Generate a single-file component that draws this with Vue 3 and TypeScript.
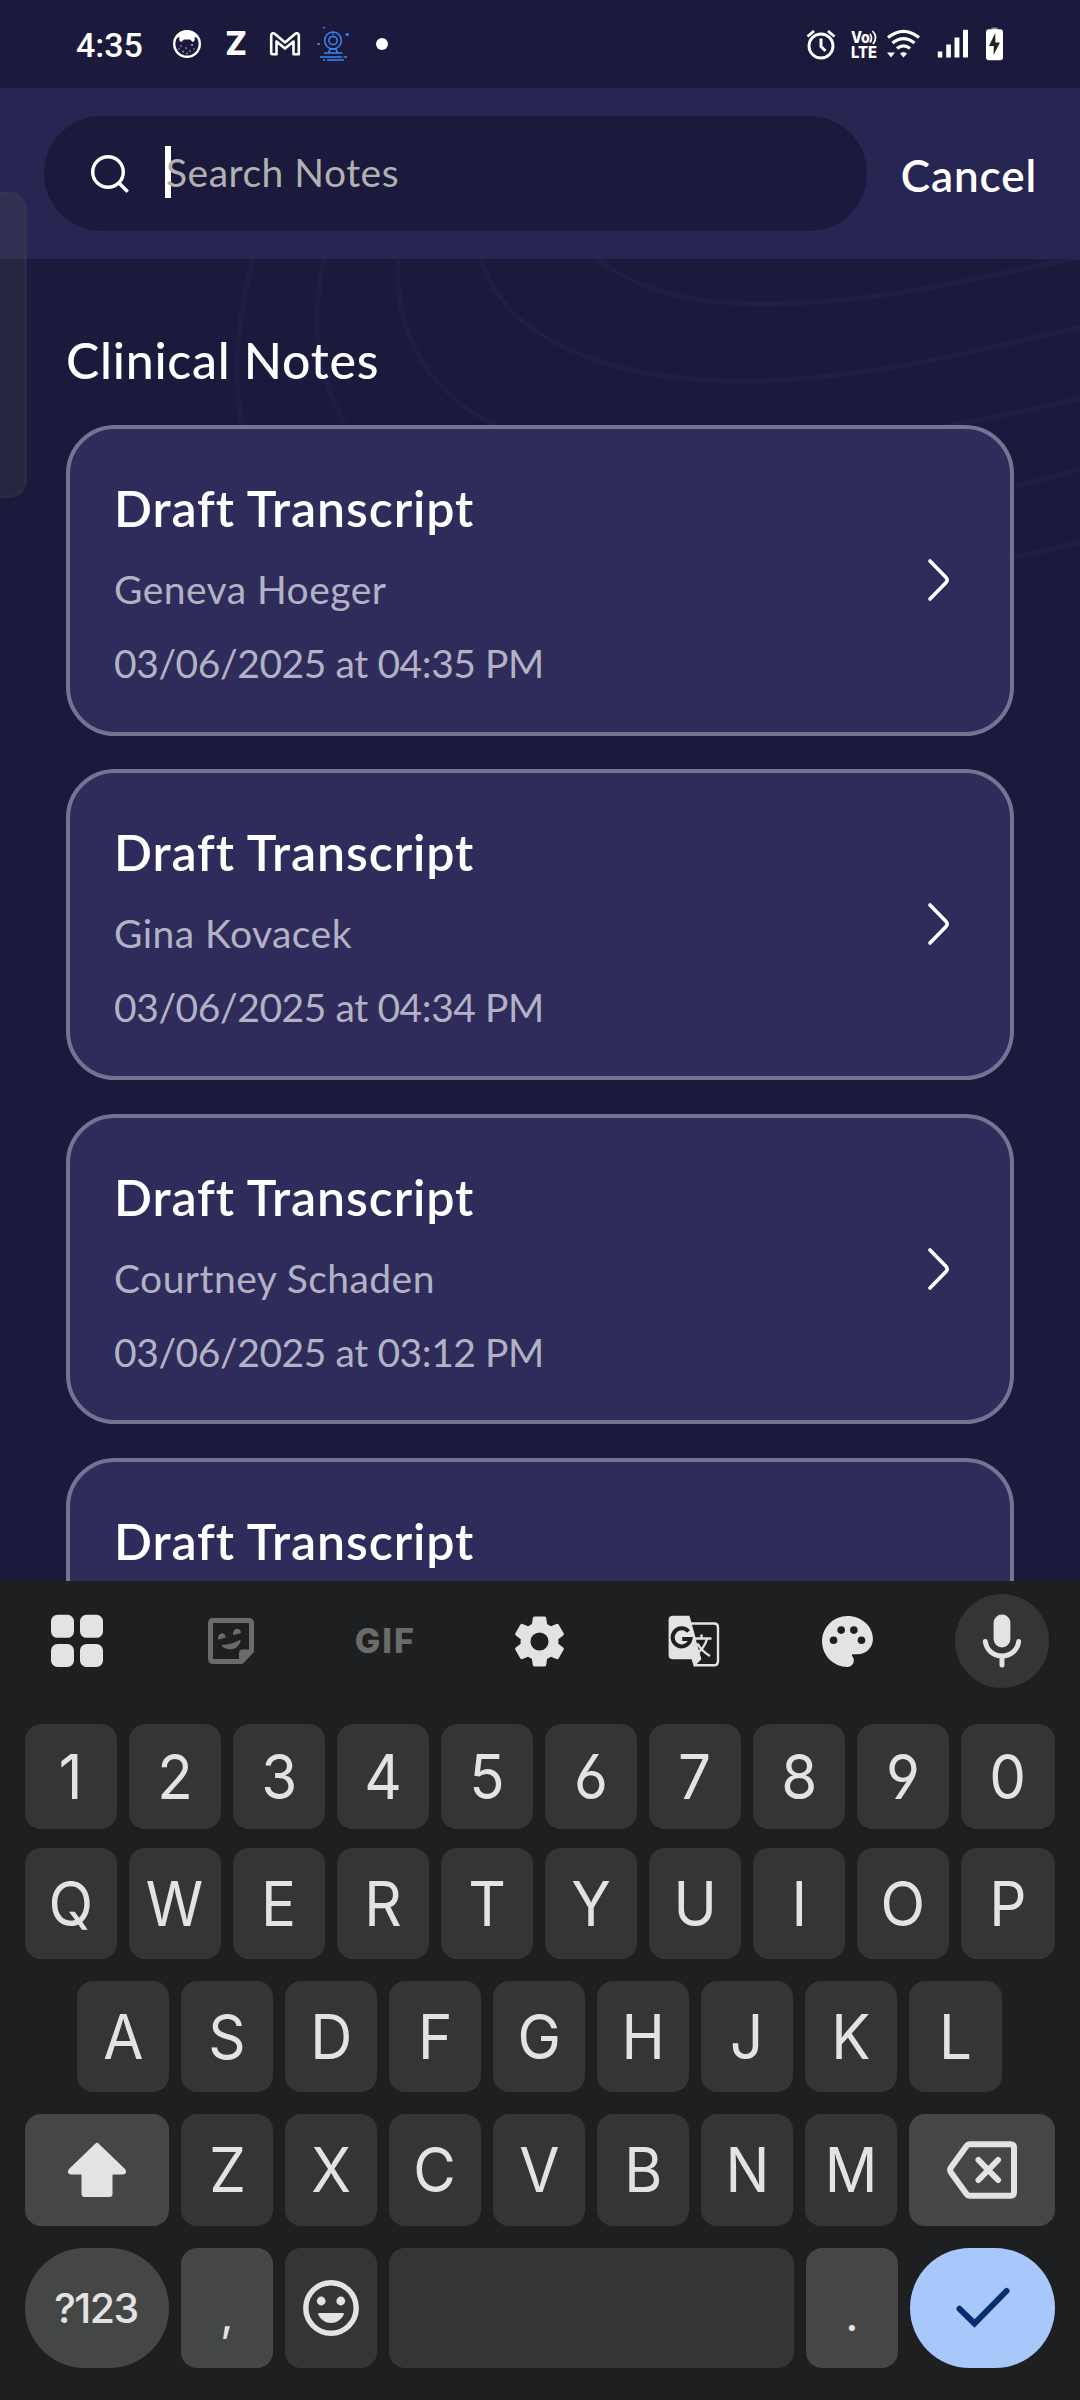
<script setup lang="ts">
interface Note {
  title: string
  patient: string
  recorded: string
}

const notes: Note[] = [
  { title: 'Draft Transcript', patient: 'Geneva Hoeger', recorded: '03/06/2025 at 04:35 PM' },
  { title: 'Draft Transcript', patient: 'Gina Kovacek', recorded: '03/06/2025 at 04:34 PM' },
  { title: 'Draft Transcript', patient: 'Courtney Schaden', recorded: '03/06/2025 at 03:12 PM' },
  { title: 'Draft Transcript', patient: '', recorded: '' },
]

const digits: string[] = '1234567890'.split('')
const topRow: string[] = 'QWERTYUIOP'.split('')
const homeRow: string[] = 'ASDFGHJKL'.split('')
const bottomRow: string[] = 'ZXCVBNM'.split('')
</script>

<template>
  <div class="screen">
    <header class="status">
      <div class="status-left">
        <span class="time">4:35</span>
        <svg class="s-cat" width="30" height="30" viewBox="0 0 30 30">
          <circle cx="15" cy="15" r="12.8" fill="none" stroke="#fff" stroke-width="2.4" />
          <path d="M4 9C6 4 10 1.5 15 1.5S24 4 26 9L22.5 8C23 10 23 12 21 13C19.5 12.5 19 11 18 10.5H12C11 11 10.500 12.500 9 13C7 12 7 10 7.500 8Z" fill="#fff" />
          <g fill="#b9b9ca">
            <circle cx="9" cy="17" r=".8" /><circle cx="14" cy="19" r=".8" /><circle cx="20" cy="16" r=".9" />
            <circle cx="18" cy="22" r=".8" /><circle cx="11" cy="22.500" r=".8" /><circle cx="15" cy="24.500" r=".8" />
            <circle cx="22" cy="20" r=".7" /><circle cx="7" cy="20" r=".7" />
          </g>
        </svg>
        <span class="s-z">Z</span>
        <svg class="s-mail" width="32" height="26" viewBox="0 0 32 26">
          <path d="M2.200 22.300V4.500C2.200 2 4.500 1.800 6 3L16 11.500L26 3C27.500 1.800 29.800 2 29.800 4.500V23.300H24.500V10.500L16 17.600L7.500 10.500V23.300H3.200Q2.200 23.300 2.200 22.300Z" fill="none" stroke="#fff" stroke-width="2.600" stroke-linejoin="round" />
        </svg>
        <svg class="s-cam" width="34" height="36" viewBox="0 0 34 36">
          <g fill="none" stroke="#3f87f6" stroke-width="1.500">
            <circle cx="17" cy="14.500" r="8.400" />
            <circle cx="17" cy="14.500" r="4.100" />
            <path d="M14.500 22.500L12.500 26.500M19.500 22.500L21.500 26.500M8 27H26.500M4 31H26M27.500 31H31M7 34H9M11 34H28M15 23H19M17 7.500V9" />
          </g>
          <g fill="#3f87f6"><circle cx="31.200" cy="8.500" r="1.600" /><rect x="1.500" y="17" width="2.200" height="2" /><rect x="7" y="1" width="2.200" height="1.300" /></g>
        </svg>
        <span class="s-dot"></span>
      </div>
      <div class="status-right">
        <svg width="30" height="32" viewBox="0 0 30 32" fill="none" stroke="#fff">
          <circle cx="15" cy="18" r="12" stroke-width="2.900" />
          <path d="M15 10.500V18.500L19.500 23" stroke-width="3" />
          <path d="M1.500 8.500L8 3M28.500 8.500L22 3" stroke-width="2.800" />
        </svg>
        <svg class="s-volte" width="28" height="30" viewBox="0 0 28 30">
          <g fill="#fff" font-family="Inter, sans-serif" font-weight="800">
            <text x="1" y="13.500" font-size="15.500" textLength="19" lengthAdjust="spacingAndGlyphs">Vo</text>
            <text x="1" y="28.700" font-size="16.500" textLength="26" lengthAdjust="spacingAndGlyphs">LTE</text>
          </g>
          <path d="M20 5Q23 9 20 13.500M22.500 2Q28.500 8 23 15" fill="none" stroke="#fff" stroke-width="1.700" />
        </svg>
        <svg class="s-wifi" width="35" height="30" viewBox="0 0 35 30">
          <g fill="none" stroke="#fff" stroke-width="3.300">
            <path d="M2 8.500Q17.500 -3.800 33 8.500" />
            <path d="M6.500 14Q17.500 5.200 28.500 14" />
            <path d="M11 19.500Q17.500 14.200 24 19.500" />
          </g>
          <path d="M14 24.500Q17.500 21.500 21 24.500L17.500 28.500ZM1 23.500H9L5 28.500Z" fill="#fff" />
        </svg>
        <svg class="s-signal" width="32" height="30" viewBox="0 0 32 30" fill="#fff">
          <rect x=".8" y="22.500" width="4.500" height="6" /><rect x="9.200" y="15.500" width="4.700" height="13" />
          <rect x="17.500" y="8.500" width="4.900" height="20" /><rect x="26" y=".8" width="5" height="27.700" />
        </svg>
        <svg class="s-battery" width="19" height="34" viewBox="0 0 19 34">
          <rect x="6.500" y=".5" width="6" height="3" fill="#8c8ca0" />
          <rect x="1" y="2.300" width="17" height="31" rx="3" fill="#fff" />
          <path d="M10.300 6L4 19H8.800L8.500 28L15 15.500H10.400Z" fill="#222" />
        </svg>
      </div>
    </header>

    <section class="search-bar">
      <div class="search-field">
        <svg class="search-icon" width="44" height="44" viewBox="0 0 44 44" fill="none" stroke="#fff" stroke-width="3.400">
          <circle cx="20" cy="20" r="15.300" /><path d="M30.500 30.500L39.700 39.700" />
        </svg>
        <div class="placeholder"><span>Search Notes</span><i class="caret"></i></div>
      </div>
      <span class="cancel">Cancel</span>
    </section>

    <main class="content">
      <svg class="waves" width="1080" height="400" viewBox="0 0 1080 400" fill="none" stroke="#211d43" stroke-width="5">
        <path d="M253 -2C241 50 230 105 243 172" />
        <path d="M324 -2C312 60 313 110 348 172" />
        <path d="M398 -2C394 80 430 138 508 172" />
        <path d="M481 -2C500 75 600 122 740 122C870 122 980 90 1082 68" />
        <path d="M595 -2C640 35 700 45 764 45C880 45 980 18 1082 -2" />
        <path d="M940 168Q1010 156 1082 139" />
        <path d="M1000 231L1082 210" />
        <path d="M1000 302L1082 283" />
      </svg>
      <h1 class="heading">Clinical Notes</h1>
      <div class="list">
        <article v-for="(note, i) in notes" :key="i" class="card">
          <div class="card-body">
            <h2>{{ note.title }}</h2>
            <p class="patient">{{ note.patient }}</p>
            <p class="date">{{ note.recorded }}</p>
          </div>
          <svg class="chevron" width="26" height="46" viewBox="0 0 26 46" fill="none" stroke="#fff" stroke-width="3.600" stroke-linecap="round" stroke-linejoin="round">
            <path d="M4 4L20.300 20.800Q22 23 20.300 25.200L4 42" />
          </svg>
        </article>
      </div>
    </main>

    <section class="keyboard">
      <div class="toolbar">
        <div class="tool">
          <svg width="54" height="54" viewBox="0 0 54 54" fill="#e3e3e3">
            <rect x="1" y=".8" width="23" height="23" rx="6.500" /><rect x="30" y=".8" width="23" height="23" rx="6.500" />
            <rect x="1" y="30" width="23" height="23" rx="6.500" /><rect x="30" y="30" width="23" height="23" rx="6.500" />
          </svg>
        </div>
        <div class="tool">
          <svg width="48" height="48" viewBox="0 0 48 48" fill="#6b6b6b">
            <path d="M6 3.400H41.500Q44.500 3.400 44.500 6.400V34L34.500 44.500H6.500Q3.500 44.500 3.500 41.500V6.400Q3.500 3.400 6 3.400Z" fill="none" stroke="#6b6b6b" stroke-width="5" stroke-linejoin="round" />
            <path d="M32 44V36Q32 32.500 35.500 32.500H44V34.500L35 44Z" />
            <path d="M11 22.800C10.500 15 18 14 18.700 20.500ZM26 18.200C25.500 10.500 33.500 9.800 34 16Z" />
            <path d="M14.500 28Q25 27.500 33.500 22.500C34 26 30 32 24.500 32.300C20 32.800 15.500 30.500 14.500 28Z" />
          </svg>
        </div>
        <div class="tool"><span class="gif">GIF</span></div>
        <div class="tool">
          <svg width="61" height="61" viewBox="0 0 24 24" fill="#e3e3e3" stroke="#e3e3e3" stroke-width=".5" stroke-linejoin="round">
            <path d="M19.140 12.940c.040-.300.060-.610.060-.940 0-.320-.020-.640-.070-.940l2.030-1.580c.180-.140.230-.410.120-.610l-1.920-3.320c-.120-.220-.370-.290-.590-.220l-2.390.960c-.500-.380-1.030-.700-1.620-.940l-.360-2.540c-.040-.240-.240-.410-.480-.410h-3.840c-.240 0-.430.170-.470.410l-.360 2.540c-.590.240-1.130.570-1.620.940l-2.390-.960c-.220-.080-.470 0-.590.220L2.740 8.870c-.120.210-.080.470.120.610l2.030 1.580c-.050.300-.090.630-.090.940s.020.640.070.940l-2.030 1.580c-.180.140-.230.410-.120.610l1.920 3.320c.120.220.370.290.590.220l2.390-.960c.500.380 1.030.700 1.620.940l.360 2.540c.050.240.240.410.480.410h3.840c.240 0 .440-.170.470-.410l.360-2.540c.590-.240 1.130-.560 1.620-.940l2.390.960c.220.080.470 0 .590-.220l1.920-3.320c.120-.220.070-.470-.120-.610l-2.010-1.580zM12 15.800c-2.100 0-3.800-1.700-3.800-3.800s1.700-3.800 3.800-3.800 3.800 1.700 3.800 3.800-1.700 3.800-3.800 3.800z" />
          </svg>
        </div>
        <div class="tool">
          <svg width="52" height="52" viewBox="0 0 52 52">
            <path d="M22 8.500H46Q50 8.500 50 12.500V46Q50 50.300 46 50.300H26" fill="none" stroke="#e3e3e3" stroke-width="2.400" />
            <path d="M5 .8H21.500L33.500 44L26 52L23.500 44.300H5Q.6 44.300 .6 40V5Q.6 .8 5 .8Z" fill="#e3e3e3" />
            <path d="M27.500 23L33.500 44L38 40L30 28Z" fill="#1e1f21" />
            <path d="M25 25L29.500 39L33 43.500L26 51.500Z" fill="#e3e3e3" />
            <path d="M20.500 16.500A9 9 0 1 0 22.500 24H14.200" fill="none" stroke="#1e1f21" stroke-width="4" />
            <path d="M26 23.500H43.500M33.500 19.500V23.500M39 24Q36 34 28.500 38.500M29.500 28.500Q34 36.500 42 41" fill="none" stroke="#e3e3e3" stroke-width="2.400" />
          </svg>
        </div>
        <div class="tool">
          <svg width="61" height="61" viewBox="0 0 24 24">
            <path d="M12 22C6.490 22 2 17.510 2 12S6.490 2 12 2s10 4.040 10 9c0 3.310-2.690 6-6 6h-1.770c-.280 0-.5.220-.5.5 0 .120.050.230.130.330.410.470.640 1.060.640 1.670A2.500 2.500 0 0 1 12 22z" fill="#e3e3e3" />
            <g fill="#1e1f21"><circle cx="6.500" cy="11.500" r="1.500" /><circle cx="9.500" cy="7.500" r="1.500" /><circle cx="14.500" cy="7.500" r="1.500" /><circle cx="17.500" cy="11.500" r="1.500" /></g>
          </svg>
        </div>
        <div class="tool">
          <div class="mic">
            <svg width="40" height="54" viewBox="0 0 40 54">
              <rect x="11.600" y=".5" width="16.800" height="33" rx="8.400" fill="#e3e3e3" />
              <path d="M3.300 27.500C4.500 36 11 42 20 42S35.500 36 36.700 27.500M20 42V51" fill="none" stroke="#e3e3e3" stroke-width="5" stroke-linecap="round" />
            </svg>
          </div>
        </div>
      </div>

      <div class="row digits">
        <div v-for="k in digits" :key="k" class="key"><span>{{ k }}</span></div>
      </div>
      <div class="row">
        <div v-for="k in topRow" :key="k" class="key"><span>{{ k }}</span></div>
      </div>
      <div class="row home">
        <div v-for="k in homeRow" :key="k" class="key"><span>{{ k }}</span></div>
      </div>
      <div class="row lower">
        <div class="key wide accent">
          <svg width="60" height="56" viewBox="0 0 60 56" fill="#e3e3e3">
            <path d="M28.500 1.500Q30 0 31.500 1.500L58 27Q61 31.500 56.500 32.500H45.500V52Q45.500 55 42.500 55H17.500Q14.500 55 14.500 52V32.500H3.500Q-1 31.500 2 27Z" />
          </svg>
        </div>
        <div v-for="k in bottomRow" :key="k" class="key"><span>{{ k }}</span></div>
        <div class="key accent">
          <svg width="72" height="60" viewBox="0 0 72 60" fill="none" stroke="#e3e3e3" stroke-width="6" stroke-linejoin="round" stroke-linecap="round">
            <path d="M23.500 4.200H64.500Q68 4.200 68 7.700V52.300Q68 55.800 64.500 55.800H23.500Q21.800 55.800 20.500 54L4.800 32.200Q3.500 30 4.800 27.800L20.500 6Q21.800 4.200 23.500 4.200Z" />
            <path d="M32.500 20L52 40M52 20L32.500 40" />
          </svg>
        </div>
      </div>
      <div class="row space-row">
        <div class="key wide accent round sym">?123</div>
        <div class="key accent punct">,</div>
        <div class="key">
          <svg width="58" height="58" viewBox="0 0 58 58">
            <circle cx="29" cy="29" r="25.200" fill="none" stroke="#e3e3e3" stroke-width="5.400" />
            <circle cx="19.200" cy="22" r="4.400" fill="#e3e3e3" /><circle cx="38.800" cy="22" r="4.400" fill="#e3e3e3" />
            <path d="M17.200 34H40.800Q42.500 34 41.800 35.500C39 41 34.500 44 29 44S19 41 16.200 35.500Q15.500 34 17.200 34Z" fill="#e3e3e3" />
          </svg>
        </div>
        <div class="key space"></div>
        <div class="key accent punct">.</div>
        <div class="key round enter">
          <svg width="56" height="42" viewBox="0 0 56 42" fill="none" stroke="#062e6f" stroke-width="6" stroke-linecap="round" stroke-linejoin="miter">
            <path d="M4.500 21.800L19.500 36.500L51.500 4" />
          </svg>
        </div>
      </div>
    </section>

    <div class="edge-panel"></div>
  </div>
</template>

<style>
body {
  background: #1b1a3d;
}
</style>

<style scoped>
.screen {
  position: relative;
  width: 1080px;
  height: 2400px;
  overflow: hidden;
  display: flex;
  flex-direction: column;
  background: #1b1a3d;
  color: #fff;
  font-family: Lato, 'Open Sans', sans-serif;
}

.screen svg {
  display: block;
  flex: none;
}

.status {
  height: 88px;
  flex: none;
  box-sizing: border-box;
  padding: 0 76px;
  display: flex;
  justify-content: space-between;
  align-items: center;
}

.status-left,
.status-right {
  display: flex;
  align-items: center;
}

.time {
  width: 68px;
  padding-top: 2px;
  font: 500 34px/40px Roboto, sans-serif;
}

.s-cat {
  margin-left: 28px;
}

.s-z {
  width: 24px;
  margin-left: 22px;
  text-align: center;
  font: 800 32px/40px Inter, sans-serif;
}

.s-mail {
  margin-left: 21px;
}

.s-cam {
  margin-left: 15px;
}

.s-dot {
  width: 12px;
  height: 12px;
  margin-left: 26px;
  border-radius: 50%;
  background: #fff;
}

.s-volte {
  margin-left: 14px;
  overflow: visible;
}

.s-wifi {
  margin-left: 8px;
}

.s-signal,
.s-battery {
  margin-left: 16px;
}

.search-bar {
  height: 171px;
  flex: none;
  box-sizing: border-box;
  padding: 0 43px 0 44px;
  display: flex;
  align-items: center;
  justify-content: space-between;
  background: #272552;
}

.search-field {
  width: 823px;
  height: 115px;
  box-sizing: border-box;
  padding-left: 44px;
  display: flex;
  align-items: center;
  border-radius: 58px;
  background: #1b1a3d;
}

.placeholder {
  position: relative;
  z-index: 0;
  margin-left: 34px;
  padding-bottom: 4px;
  color: #b1b1b1;
  font-size: 39px;
  line-height: 48px;
  letter-spacing: 0.5px;
}

.caret {
  position: absolute;
  left: -1px;
  top: -2px;
  width: 6px;
  height: 52px;
  background: #fff;
  z-index: -1;
}

.cancel {
  padding-top: 2px;
  font-size: 44px;
  font-weight: 600;
  line-height: 54px;
  letter-spacing: 0.9px;
}

.content {
  position: relative;
  height: 1322px;
  flex: none;
  overflow: hidden;
}

.waves {
  position: absolute;
  left: 0;
  top: 0;
}

.heading {
  position: relative;
  margin: 71px 0 35px 66px;
  font-size: 50px;
  line-height: 60px;
  font-weight: 500;
  letter-spacing: 0.75px;
}

.list {
  position: relative;
  padding: 0 66px;
  display: flex;
  flex-direction: column;
  gap: 33.700px;
}

.card {
  height: 310.700px;
  flex: none;
  box-sizing: border-box;
  padding: 49px 58px 0 44px;
  display: flex;
  justify-content: space-between;
  border: 4px solid #757392;
  border-radius: 49px;
  background: #2f2c5b;
}

.card h2 {
  margin: 0;
  font-size: 50px;
  line-height: 60px;
  font-weight: 600;
  letter-spacing: 0.9px;
}

.card p {
  margin: 0;
  height: 48px;
  font-size: 39px;
  line-height: 48px;
  color: #b3b2c4;
}

.card .patient {
  margin-top: 27px;
  letter-spacing: 0.45px;
}

.card .date {
  margin-top: 26px;
  letter-spacing: -0.42px;
}

.chevron {
  margin-top: 79px;
}

.keyboard {
  height: 819px;
  flex: none;
  background: #1e1f21;
  color: #e3e3e3;
}

.toolbar {
  height: 120px;
  padding-right: 1px;
  display: flex;
}

.tool {
  flex: 1;
  display: flex;
  align-items: center;
  justify-content: center;
}

.gif {
  color: #6b6b6b;
  font: 800 34px/40px Inter, sans-serif;
  letter-spacing: 2px;
}

.mic {
  width: 94px;
  height: 94px;
  border-radius: 50%;
  display: flex;
  align-items: center;
  justify-content: center;
  background: #343537;
}

.row {
  height: 111px;
  margin-top: 22px;
  padding: 0 25px;
  display: flex;
  gap: 12px;
}

.row.digits {
  height: 105px;
  margin-top: 23px;
  margin-bottom: -3px;
}

.row.home {
  padding: 0 78px 0 77px;
}

.row.lower {
  height: 112px;
}

.row.space-row {
  height: 120px;
}

.key {
  flex: 0 0 92px;
  min-width: 0;
  display: flex;
  align-items: center;
  justify-content: center;
  border-radius: 16px;
  background: #343537;
  font: 400 62px/1 Inter, sans-serif;
  font-feature-settings: 'cv03', 'cv04';
}

.key span {
  transform: scaleX(0.94);
}

.key:last-child {
  flex: 1;
}

.key.wide {
  flex-basis: 144px;
}

.key.space {
  flex-basis: 405px;
}

.key.accent {
  background: #454746;
}

.key.round {
  border-radius: 60px;
}

.key.sym {
  box-sizing: border-box;
  padding-right: 2px;
  font-size: 41px;
  font-weight: 500;
  letter-spacing: -1.5px;
}

.key.punct {
  box-sizing: border-box;
  padding-top: 12px;
  font-size: 46px;
}

.key.enter {
  background: #a8c7fa;
}

.edge-panel {
  position: absolute;
  left: -4px;
  top: 192px;
  width: 31px;
  height: 306px;
  box-sizing: border-box;
  border: 3px solid rgba(90, 90, 70, 0.1);
  border-radius: 0 18px 18px 0;
  background: rgba(95, 92, 84, 0.19);
}
</style>
